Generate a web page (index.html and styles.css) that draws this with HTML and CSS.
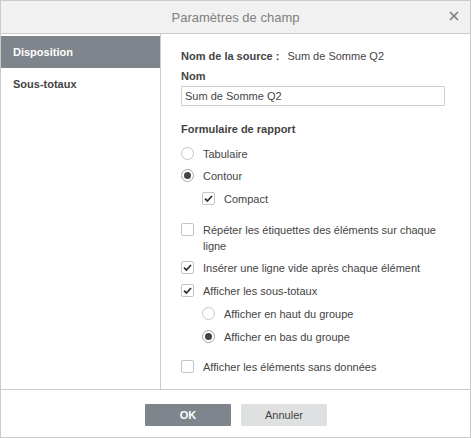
FILE: index.html
```html
<!DOCTYPE html>
<html lang="fr">
<head>
<meta charset="utf-8">
<title>Paramètres de champ</title>
<link rel="stylesheet" href="styles.css">
</head>
<body>
<div class="dialog">
  <div class="header">
    <span class="title">Paramètres de champ</span>
    <span class="close">
      <svg width="10" height="10" viewBox="0 0 10 10"><path d="M1 1L9 9M9 1L1 9" stroke="#7b7b7b" stroke-width="1.6" fill="none"/></svg>
    </span>
  </div>
  <div class="body">
    <div class="sidebar">
      <div class="nav-item active">Disposition</div>
      <div class="nav-item">Sous-totaux</div>
    </div>
    <div class="content">
      <div class="row source"><b>Nom de la source :</b><span class="source-val">Sum de Somme Q2</span></div>
      <div class="row label">Nom</div>
      <div class="input">Sum de Somme Q2</div>
      <div class="row label section">Formulaire de rapport</div>
      <div class="row opt r-tab"><span class="radio"></span><span class="txt">Tabulaire</span></div>
      <div class="row opt r-cont"><span class="radio on"></span><span class="txt">Contour</span></div>
      <div class="row opt sub c-comp"><span class="check on"><svg width="11" height="11" viewBox="0 0 11 11"><path d="M2 5.6L4.4 8L9 3" stroke="#333" stroke-width="1.8" fill="none"/></svg></span><span class="txt">Compact</span></div>
      <div class="row opt multi c-rep"><span class="check"></span><span class="txt">Répéter les étiquettes des éléments sur chaque ligne</span></div>
      <div class="row opt c-ins"><span class="check on"><svg width="11" height="11" viewBox="0 0 11 11"><path d="M2 5.6L4.4 8L9 3" stroke="#333" stroke-width="1.8" fill="none"/></svg></span><span class="txt">Insérer une ligne vide après chaque élément</span></div>
      <div class="row opt c-sub"><span class="check on"><svg width="11" height="11" viewBox="0 0 11 11"><path d="M2 5.6L4.4 8L9 3" stroke="#333" stroke-width="1.8" fill="none"/></svg></span><span class="txt">Afficher les sous-totaux</span></div>
      <div class="row opt sub r-top"><span class="radio"></span><span class="txt">Afficher en haut du groupe</span></div>
      <div class="row opt sub r-bot"><span class="radio on"></span><span class="txt">Afficher en bas du groupe</span></div>
      <div class="row opt c-empty"><span class="check"></span><span class="txt">Afficher les éléments sans données</span></div>
    </div>
  </div>
  <div class="footer">
    <button class="btn primary">OK</button>
    <button class="btn secondary">Annuler</button>
  </div>
</div>
</body>
</html>
```
FILE: styles.css
```css
* { box-sizing: border-box; }
html, body { margin: 0; padding: 0; background: #fff; }
body {
  font-family: "Liberation Sans", Arial, sans-serif;
  font-size: 11px;
  color: #444;
}
.dialog {
  width: 471px;
  height: 438px;
  border: 1px solid #cbcbcb;
  display: flex;
  flex-direction: column;
}
.header {
  height: 33px;
  flex: none;
  background: #f1f1f1;
  border-bottom: 1px solid #cbcbcb;
  position: relative;
  display: flex;
  align-items: center;
  justify-content: center;
}
.title {
  font-size: 13px;
  color: #7f7f7f;
}
.close {
  position: absolute;
  right: 11px;
  top: 10px;
  width: 10px;
  height: 10px;
  display: flex;
}
.body {
  flex: 1;
  display: flex;
  min-height: 0;
}
.sidebar {
  width: 160px;
  flex: none;
  border-right: 1px solid #cbcbcb;
  padding-top: 2px;
}
.nav-item {
  height: 32px;
  line-height: 32px;
  padding-left: 12px;
  font-weight: bold;
  color: #444;
}
.nav-item.active {
  background: #7e858c;
  color: #fff;
}
.content {
  flex: 1;
  padding: 14px 0 0 20px;
  display: flex;
  flex-direction: column;
  align-items: flex-start;
}
.row {
  line-height: 16px;
  min-height: 16px;
}
.source b { font-weight: bold; }
.source-val { margin-left: 8px; }
.label { font-weight: bold; margin-top: 4px; }
.input {
  margin-top: 2px;
  width: 264px;
  height: 20px;
  border: 1px solid #cfcfcf;
  border-radius: 1px;
  padding-left: 3px;
  line-height: 18px;
  color: #444;
}
.section { margin-top: 15px; }
.opt {
  display: flex;
  align-items: flex-start;
}
.opt.sub { padding-left: 21px; }
.radio, .check {
  flex: none;
  width: 13px;
  height: 13px;
  margin-top: 1px;
  margin-right: 9px;
  border: 1px solid #c4c4c4;
  display: flex;
  align-items: center;
  justify-content: center;
  background: #fff;
}
.radio { border-radius: 50%; }
.radio.on { border-color: #a8a8a8; }
.radio.on::after {
  content: "";
  width: 7px;
  height: 7px;
  border-radius: 50%;
  background: #444;
}
.check { border-radius: 2px; }
.check svg { display: block; }
.txt { display: block; }
.multi .txt { width: 242px; }

.r-tab { margin-top: 9px; }
.r-cont { margin-top: 6px; }
.c-comp { margin-top: 7px; }
.c-rep { margin-top: 15px; }
.c-ins { margin-top: 6px; }
.c-sub { margin-top: 7px; }
.r-top { margin-top: 7px; }
.r-bot { margin-top: 7px; }
.c-empty { margin-top: 14px; }

.footer {
  height: 48px;
  flex: none;
  border-top: 1px solid #cbcbcb;
  display: flex;
  justify-content: center;
  align-items: flex-start;
  gap: 10px;
  padding-top: 14px;
  padding-left: 1px;
}
.btn {
  width: 86px;
  height: 22px;
  border: none;
  border-radius: 1px;
  font-family: "Liberation Sans", Arial, sans-serif;
  font-size: 11px;
  padding: 0;
  cursor: pointer;
}
.btn.primary {
  background: #7e858c;
  color: #fff;
  font-weight: bold;
}
.btn.secondary {
  background: #dfe0e1;
  color: #444;
}
```
